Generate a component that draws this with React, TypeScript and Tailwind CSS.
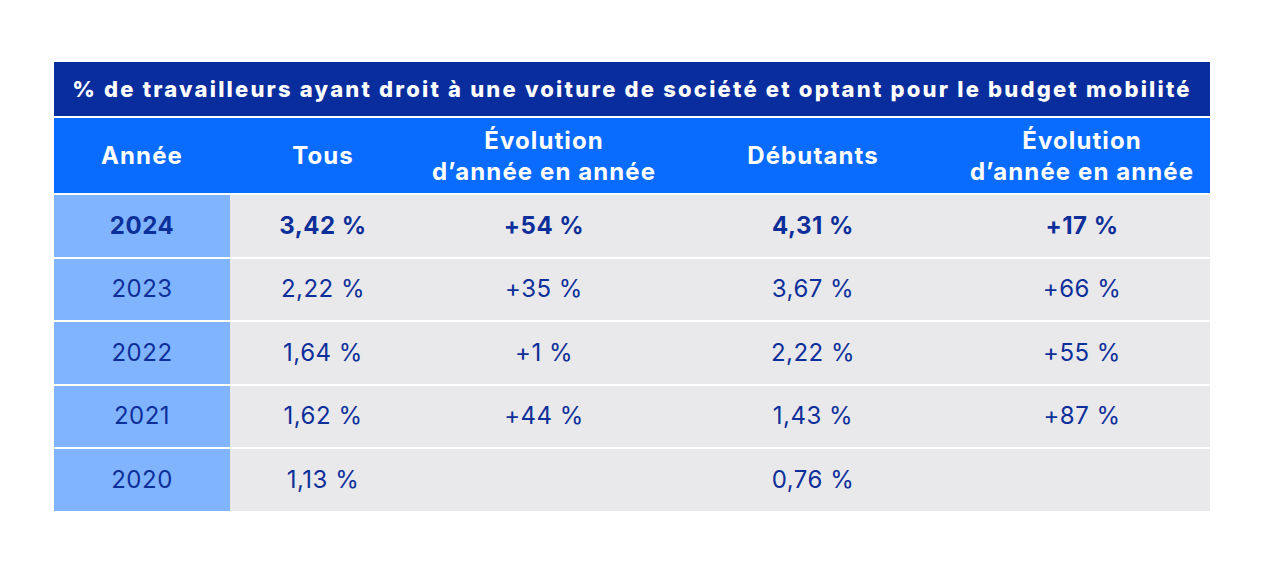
const rows = [
  { year: '2024', tous: '3,42 %', evo1: '+54 %', deb: '4,31 %', evo2: '+17 %', bold: true },
  { year: '2023', tous: '2,22 %', evo1: '+35 %', deb: '3,67 %', evo2: '+66 %' },
  { year: '2022', tous: '1,64 %', evo1: '+1 %', deb: '2,22 %', evo2: '+55 %' },
  { year: '2021', tous: '1,62 %', evo1: '+44 %', deb: '1,43 %', evo2: '+87 %' },
  { year: '2020', tous: '1,13 %', evo1: '', deb: '0,76 %', evo2: '' },
]

const cols = 'grid grid-cols-[176px_186px_256px_282px_256px]'

export default function App() {
  return (
    <main className="min-h-screen bg-white pt-[62px] pl-[54px]" style={{ fontFamily: 'Inter, "Noto Sans", sans-serif' }}>
      <div className="w-[1156px] flex flex-col gap-[2px] text-[#0d2f9a]">
        <div className="h-[54px] bg-[#0a2d9e] flex items-center justify-center text-white text-[22px] font-extrabold tracking-[2.2px]">
          % de travailleurs ayant droit à une voiture de société et optant pour le budget mobilité
        </div>

        <div className={`${cols} h-[75px] bg-[#0a6cff] text-white text-[24px] font-bold tracking-[1.1px] leading-[31px] text-center`}>
          <div className="flex items-center justify-center">Année</div>
          <div className="flex items-center justify-center">Tous</div>
          <div className="flex flex-col items-center justify-center">
            <span>Évolution</span>
            <span>d’année en année</span>
          </div>
          <div className="flex items-center justify-center">Débutants</div>
          <div className="flex flex-col items-center justify-center">
            <span>Évolution</span>
            <span>d’année en année</span>
          </div>
        </div>

        {rows.map(row => (
          <div
            key={row.year}
            className={`${cols} h-[61.5px] bg-[#e9e9ec] text-[24px] tracking-[0.5px] text-center ${row.bold ? 'font-bold' : 'font-normal'}`}
          >
            <div className="bg-[#80b4ff] flex items-center justify-center">{row.year}</div>
            <div className="flex items-center justify-center">{row.tous}</div>
            <div className="flex items-center justify-center">{row.evo1}</div>
            <div className="flex items-center justify-center">{row.deb}</div>
            <div className="flex items-center justify-center">{row.evo2}</div>
          </div>
        ))}
      </div>
    </main>
  )
}
